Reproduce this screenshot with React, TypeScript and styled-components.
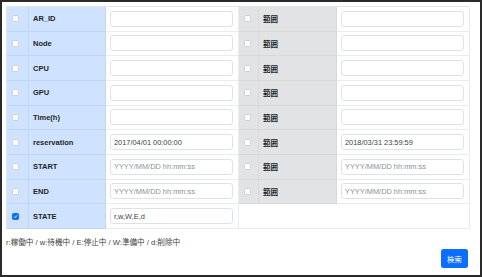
import { createGlobalStyle, styled } from "styled-components";

type Tone = "primary" | "secondary" | "plain";

interface Row {
  key: string;
  checked?: boolean;
  value?: string;
  placeholder?: string;
  range?: { value?: string; placeholder?: string } | null;
}

const DATE_HINT = "YYYY/MM/DD hh:mm:ss";

const rows: Row[] = [
  { key: "AR_ID", range: {} },
  { key: "Node", range: {} },
  { key: "CPU", range: {} },
  { key: "GPU", range: {} },
  { key: "Time(h)", range: {} },
  {
    key: "reservation",
    value: "2017/04/01 00:00:00",
    range: { value: "2018/03/31 23:59:59" },
  },
  { key: "START", placeholder: DATE_HINT, range: { placeholder: DATE_HINT } },
  { key: "END", placeholder: DATE_HINT, range: { placeholder: DATE_HINT } },
  { key: "STATE", checked: true, value: "r,w,W,E,d", range: null },
];

const GlobalStyle = createGlobalStyle`
  html, body {
    margin: 0;
    padding: 0;
    background: #fff;
  }
  body {
    font-family: "Liberation Sans", "Noto Sans CJK JP", sans-serif;
    color: #212529;
  }
`;

const Frame = styled.div`
  box-sizing: border-box;
  width: 482px;
  height: 277px;
  border: 2px solid #2a2a2a;
  padding: 4px 11px 0 4px;
  display: flex;
  flex-direction: column;
  background: #fff;
`;

const Grid = styled.div`
  display: grid;
  grid-template-columns: 22px 77px 133px 20px 78px 133px;
  grid-auto-rows: 24.67px;
  border-top: 1px solid #e3e6e9;
  border-left: 1px solid #e3e6e9;
`;

const toneBg: Record<Tone, string> = {
  primary: "#cfe2ff",
  secondary: "#e2e3e5",
  plain: "#ffffff",
};

const toneLine: Record<Tone, string> = {
  primary: "#c3d5f0",
  secondary: "#d8d9db",
  plain: "#e9ecef",
};

const Cell = styled.div<{ $tone: Tone; $span?: number }>`
  box-sizing: border-box;
  display: flex;
  align-items: center;
  padding: 0 5px 0 4px;
  background: ${(p) => toneBg[p.$tone]};
  border-bottom: 1px solid ${(p) => toneLine[p.$tone]};
  border-right: 1px solid ${(p) => toneLine[p.$tone]};
  grid-column: span ${(p) => p.$span ?? 1};
  min-width: 0;
`;

const Label = styled.span`
  font-size: 7.5px;
  font-weight: 700;
  color: #212529;
  white-space: nowrap;
`;

const Box = styled.span<{ $checked?: boolean }>`
  box-sizing: border-box;
  width: 7px;
  height: 7px;
  margin-left: 1px;
  border-radius: 1.5px;
  border: 1px solid ${(p) => (p.$checked ? "#0d6efd" : "#cdd1d5")};
  background: ${(p) => (p.$checked ? "#0d6efd" : "#fff")};
  display: flex;
  align-items: center;
  justify-content: center;
`;

const Field = styled.input`
  box-sizing: border-box;
  width: 100%;
  height: 16px;
  padding: 0 3px;
  border: 1px solid #dee2e6;
  border-radius: 3px;
  background: #fff;
  font-family: "Liberation Sans", "Noto Sans CJK JP", sans-serif;
  font-size: 7.4px;
  color: #3a3f44;
  outline: none;
  &::placeholder {
    color: #8a9097;
  }
`;

const Note = styled.div`
  margin-top: 8px;
  height: 12px;
  line-height: 12px;
  font-size: 7.6px;
  color: #3a3f44;
  white-space: nowrap;
`;

const Actions = styled.div`
  display: flex;
  justify-content: flex-end;
  padding-right: 1px;
  margin-top: 0;
`;

const Search = styled.button`
  box-sizing: border-box;
  width: 27px;
  height: 19px;
  padding: 0;
  border: none;
  border-radius: 2.5px;
  background: #0d6efd;
  color: #fff;
  font-family: "Noto Sans CJK JP", sans-serif;
  font-size: 7.4px;
`;

function Check({ checked }: { checked?: boolean }) {
  return (
    <Box $checked={checked}>
      {checked && (
        <svg width="5" height="5" viewBox="0 0 10 10">
          <path d="M2 5.2 L4.2 7.4 L8.2 2.8" fill="none" stroke="#fff" strokeWidth="1.8" />
        </svg>
      )}
    </Box>
  );
}

export default function App() {
  return (
    <>
      <GlobalStyle />
      <Frame>
        <Grid>
          {rows.map((r) => (
            <div key={r.key} style={{ display: "contents" }}>
              <Cell $tone="primary">
                <Check checked={r.checked} />
              </Cell>
              <Cell $tone="primary">
                <Label>{r.key}</Label>
              </Cell>
              <Cell $tone="plain">
                <Field readOnly value={r.value ?? ""} placeholder={r.placeholder} />
              </Cell>
              {r.range ? (
                <>
                  <Cell $tone="secondary">
                    <Check />
                  </Cell>
                  <Cell $tone="secondary">
                    <Label>範囲</Label>
                  </Cell>
                  <Cell $tone="plain">
                    <Field
                      readOnly
                      value={r.range.value ?? ""}
                      placeholder={r.range.placeholder}
                    />
                  </Cell>
                </>
              ) : (
                <Cell $tone="plain" $span={3} />
              )}
            </div>
          ))}
        </Grid>
        <Note>r:稼働中 / w:待機中 / E:停止中 / W:準備中 / d:削除中</Note>
        <Actions>
          <Search>検索</Search>
        </Actions>
      </Frame>
    </>
  );
}
